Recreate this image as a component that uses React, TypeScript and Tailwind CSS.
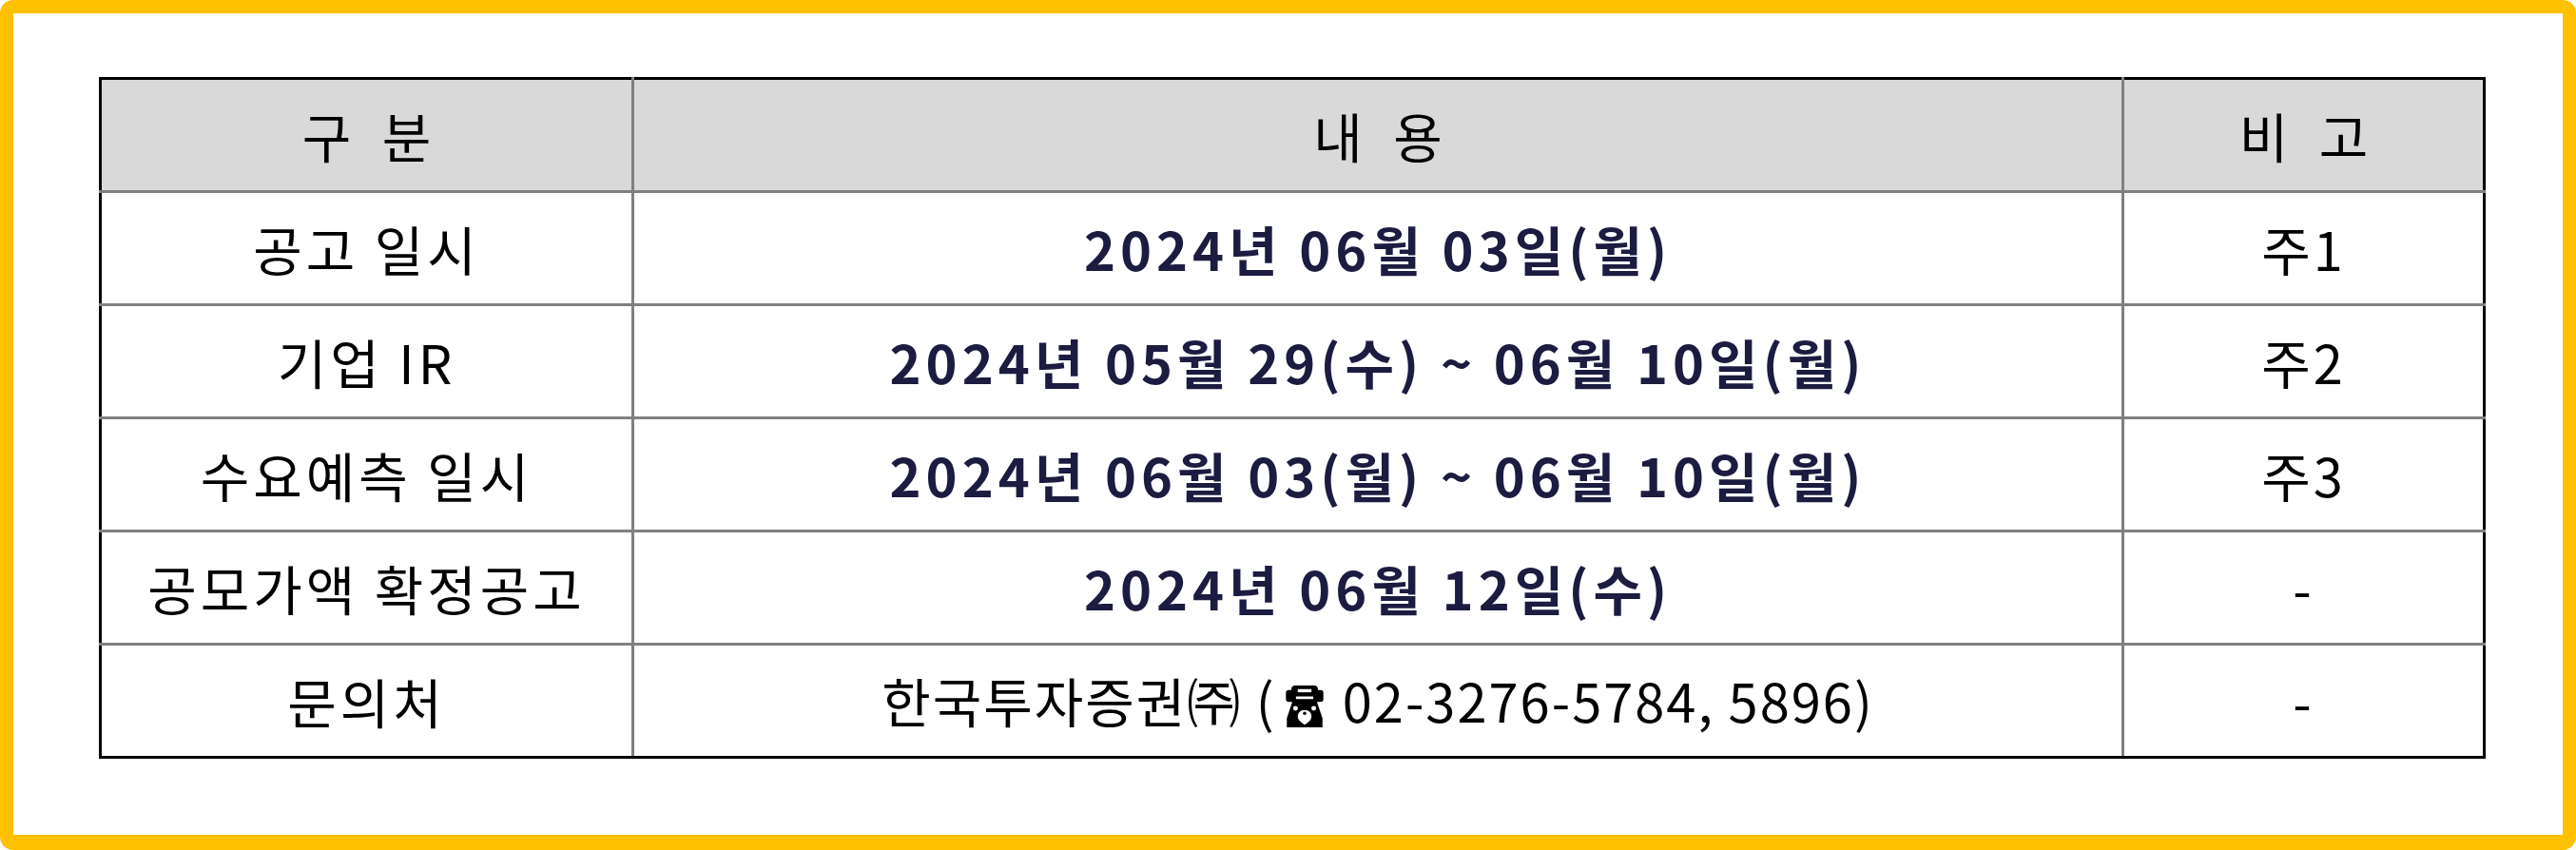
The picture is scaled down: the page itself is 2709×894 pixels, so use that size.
import React from "react";

type Row = {
  label: string;
  content: React.ReactNode;
  note: string;
  bold?: boolean;
};

function PhoneIcon() {
  return (
    <svg
      viewBox="0 0 45 50"
      className="ml-[8px] mr-[18px] inline-block h-[48px] w-[44px] align-[-7px]"
      aria-hidden
    >
      <rect x="8" y="2" width="29" height="12" rx="4" fill="#000" />
      <rect x="2" y="7" width="11" height="13" rx="3" fill="#000" />
      <rect x="32" y="7" width="11" height="13" rx="3" fill="#000" />
      <rect x="15" y="6" width="15" height="3.5" fill="#fff" />
      <path d="M10 17 L35 17 L42 38 L42 48 L3 48 L3 38 Z" fill="#000" />
      <circle cx="12.5" cy="27" r="2.6" fill="#fff" />
      <circle cx="32.5" cy="27" r="2.6" fill="#fff" />
      <path
        d="M22.5 29 C27 29 30 32 30 36 C30 40 26 43 22.5 45 C19 43 15 40 15 36 C15 32 18 29 22.5 29 Z"
        fill="#fff"
      />
      <circle cx="22.5" cy="32.5" r="1.8" fill="#000" />
    </svg>
  );
}

const rows: Row[] = [
  { label: "공고 일시", content: "2024년 06월 03일(월)", note: "주1", bold: true },
  {
    label: "기업 IR",
    content: "2024년 05월 29(수) ~ 06월 10일(월)",
    note: "주2",
    bold: true,
  },
  {
    label: "수요예측 일시",
    content: "2024년 06월 03(월) ~ 06월 10일(월)",
    note: "주3",
    bold: true,
  },
  { label: "공모가액 확정공고", content: "2024년 06월 12일(수)", note: "-", bold: true },
  {
    label: "문의처",
    content: (
      <>
        한국투자증권㈜ (<PhoneIcon />
        02-3276-5784, 5896)
      </>
    ),
    note: "-",
  },
];

export default function App() {
  return (
    <div
      className="h-[894px] w-[2709px] overflow-hidden rounded-[14px] border-[14px] border-b-[16px] border-[#FFC000] bg-white pl-[90px] pt-[67px]"
      style={{ fontFamily: '"Noto Sans CJK KR", "Noto Sans", sans-serif' }}
    >
      <table className="w-[2507px] table-fixed border-collapse border-[3px] border-black text-[56px] leading-none text-black">
        <colgroup>
          <col className="w-[560px]" />
          <col className="w-[1567px]" />
          <col className="w-[380px]" />
        </colgroup>
        <thead>
          <tr className="h-[119px] bg-[#d9d9d9] [word-spacing:20px]">
            <th className="border-[3px] border-[#808080] border-t-black border-l-black font-normal">
              구 분
            </th>
            <th className="border-[3px] border-[#808080] border-t-black font-normal">내 용</th>
            <th className="border-[3px] border-[#808080] border-t-black border-r-black font-normal">
              비 고
            </th>
          </tr>
        </thead>
        <tbody>
          {rows.map((r, i) => {
            const last = i === rows.length - 1;
            return (
              <tr key={i} className="h-[119px]">
                <td
                  className={
                    last
                      ? "border-[3px] border-[#808080] border-b-black border-l-black text-center tracking-[4px]"
                      : "border-[3px] border-[#808080] border-l-black text-center tracking-[4px]"
                  }
                >
                  {r.label}
                </td>
                <td
                  className={
                    r.bold
                      ? "border-[3px] border-[#808080] text-center font-bold tracking-[5px] text-[#1c1c40]"
                      : "border-[3px] border-[#808080] border-b-black text-center tracking-[2px]"
                  }
                >
                  {r.content}
                </td>
                <td
                  className={
                    last
                      ? "border-[3px] border-[#808080] border-b-black border-r-black text-center tracking-[3px]"
                      : "border-[3px] border-[#808080] border-r-black text-center tracking-[3px]"
                  }
                >
                  {r.note}
                </td>
              </tr>
            );
          })}
        </tbody>
      </table>
    </div>
  );
}
